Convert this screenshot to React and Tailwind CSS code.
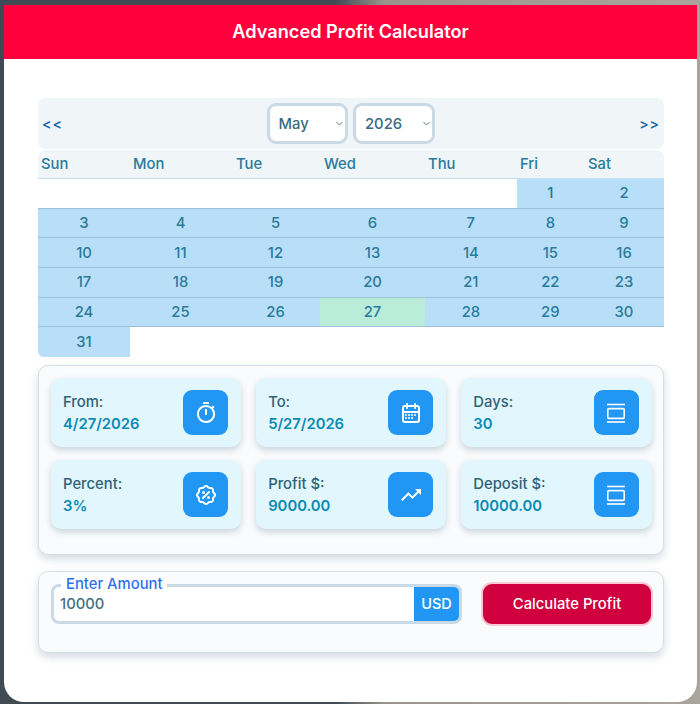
import React from 'react';
import { MdOutlineTimer, MdTrendingUp } from 'react-icons/md';
import { TbRosetteDiscount, TbCalendarMonth } from 'react-icons/tb';

const MONTHS = ['January', 'February', 'March', 'April', 'May', 'June', 'July', 'August', 'September', 'October', 'November', 'December'];
const WEEKDAYS = ['Sun', 'Mon', 'Tue', 'Wed', 'Thu', 'Fri', 'Sat'];

const WEEKS = [
    [null, null, null, null, null, 1, 2],
    [3, 4, 5, 6, 7, 8, 9],
    [10, 11, 12, 13, 14, 15, 16],
    [17, 18, 19, 20, 21, 22, 23],
    [24, 25, 26, 27, 28, 29, 30],
    [31, null, null, null, null, null, null],
];

const ViewDayIcon = ({ size }) => (
    <svg width={size} height={size} viewBox="0 0 24 24" fill="none" stroke="currentColor" strokeWidth="1.6">
        <path d="M3 3.5h18" />
        <rect x="3.8" y="7.6" width="16.4" height="9.8" rx="1" />
        <path d="M3 21h18" />
    </svg>
);

const STATS = [
    { label: 'From:', value: '4/27/2026', icon: MdOutlineTimer },
    { label: 'To:', value: '5/27/2026', icon: TbCalendarMonth },
    { label: 'Days:', value: '30', icon: ViewDayIcon },
    { label: 'Percent:', value: '3%', icon: TbRosetteDiscount },
    { label: 'Profit $:', value: '9000.00', icon: MdTrendingUp },
    { label: 'Deposit $:', value: '10000.00', icon: ViewDayIcon },
];

const Dropdown = ({ defaultValue, options }) => (
    <div className="relative">
        <select
            defaultValue={defaultValue}
            className="appearance-none w-[81.5px] h-[41px] rounded-[9px] border-[3px] border-[#c9d9e5] bg-white pl-[9px] pt-[2px] text-[14.8px] font-medium text-[#3b6a80] outline-none"
        >
            {options.map((o) => <option key={o}>{o}</option>)}
        </select>
        <svg className="absolute right-[5px] top-[18px] pointer-events-none" width="7" height="5" viewBox="0 0 7 5" fill="none" stroke="#5a7a8a" strokeWidth="1">
            <path d="M0.5 1l3 3 3-3" />
        </svg>
    </div>
);

const StatCard = ({ label, value, icon: Icon }) => (
    <div className="h-[69px] flex items-center justify-between pl-[12px] pr-[13px] rounded-[10px] bg-[#e2f6fe] shadow-[0_3px_6px_rgba(60,90,110,0.24)]">
        <div>
            <div className="text-[14.8px] leading-[22px] font-medium text-[#2f6377]">{label}</div>
            <div className="text-[14.8px] leading-[22px] font-semibold text-[#0b8ab3]">{value}</div>
        </div>
        <div className="w-[45px] h-[45px] rounded-[9px] bg-[#2196f3] flex items-center justify-center text-white">
            <Icon size={24} />
        </div>
    </div>
);

const Calendar = () => (
    <div>
        <div className="h-[51px] flex items-center justify-between px-[4px] rounded-[8px] bg-[#f0f5f8]">
            <button className="text-[14px] font-semibold tracking-[1px] text-[#1565a8]">&lt;&lt;</button>
            <div className="flex gap-[5px] pr-[1px]">
                <Dropdown defaultValue="May" options={MONTHS} />
                <Dropdown defaultValue="2026" options={['2025', '2026', '2027']} />
            </div>
            <button className="text-[14px] font-semibold tracking-[1px] text-[#1565a8]">&gt;&gt;</button>
        </div>
        <div className="mt-[1px] h-[29px] grid grid-cols-[92px_103px_88px_104px_92px_68px_79px] items-center rounded-t-[8px] bg-[#f0f5f8] border-b border-[#c5dced]">
            {WEEKDAYS.map((d) => (
                <div key={d} className="pl-[3px] text-[14.8px] font-medium text-[#2a7a9b]">{d}</div>
            ))}
        </div>
        {WEEKS.map((week, i) => (
            <div key={i} className={`grid grid-cols-[92px_101px_89px_105px_91.7px_67.3px_80px] h-[29.7px] ${i < 5 ? 'border-b border-[#9dbfd8]' : ''}`}>
                {week.map((day, j) => (
                    <div
                        key={j}
                        className={`flex items-center justify-center text-[14.8px] font-medium text-[#2a7a9b] ${day === null ? 'bg-white' : day === 27 ? 'bg-[#b9ecd9]' : 'bg-[#b8dff7]'} ${day === 31 ? 'rounded-bl-[6px]' : ''}`}
                    >
                        {day}
                    </div>
                ))}
            </div>
        ))}
    </div>
);

const App = () => (
    <div className="h-[704px] pt-[5px] pl-[4px] pr-[3px] pb-[2px] bg-[linear-gradient(90deg,#3f4a52_0%,#424c54_48%,#9a958c_55%,#aaa59c_100%)] font-['Inter',sans-serif]">
        <div className="h-full flex flex-col bg-white rounded-b-[20px] overflow-hidden">
            <div className="h-[54px] shrink-0 flex items-center justify-center bg-[#ff003c] text-white text-[18.2px] font-semibold">
                Advanced Profit Calculator
            </div>
            <div className="pt-[39px] pl-[34px] pr-[33px]">
                <Calendar />

                <div className="mt-[8px] h-[190px] pt-[12px] pl-[12px] pr-[11.5px] rounded-[10px] border border-[#d3dfe8] bg-[#f9fbfd] shadow-[0_4px_8px_rgba(60,90,110,0.22)]">
                    <div className="grid grid-cols-3 gap-x-[15px] gap-y-[13px]">
                        {STATS.map((s) => <StatCard key={s.label} {...s} />)}
                    </div>
                </div>

                <div className="mt-[16px] h-[82px] pt-[10px] pl-[12px] pr-[10px] flex items-start gap-[19px] rounded-[10px] border border-[#d3dfe8] bg-[#f9fbfd] shadow-[0_4px_8px_rgba(60,90,110,0.22)]">
                    <div className="relative mt-[2px] w-[411px] h-[40px] flex rounded-[8px] border-[3px] border-[#c9d9e5] bg-white">
                        <span className="absolute -top-[12px] left-[7px] px-[5px] bg-white text-[14.8px] leading-[18px] font-medium text-[#2f6fed]">Enter Amount</span>
                        <input
                            defaultValue="10000"
                            className="flex-1 min-w-0 pl-[6px] text-[14.8px] font-medium text-[#44707f] outline-none bg-transparent"
                        />
                        <div className="w-[45px] flex items-center justify-center rounded-r-[5px] bg-[#2196f3] text-white text-[14.5px] font-medium">USD</div>
                    </div>
                    <button className="w-[172px] h-[44px] shrink-0 rounded-[11px] border-2 border-[#f8c8d5] bg-[#cf003d] text-white text-[14.8px] font-medium">
                        Calculate Profit
                    </button>
                </div>
            </div>
        </div>
    </div>
);

export default App;
